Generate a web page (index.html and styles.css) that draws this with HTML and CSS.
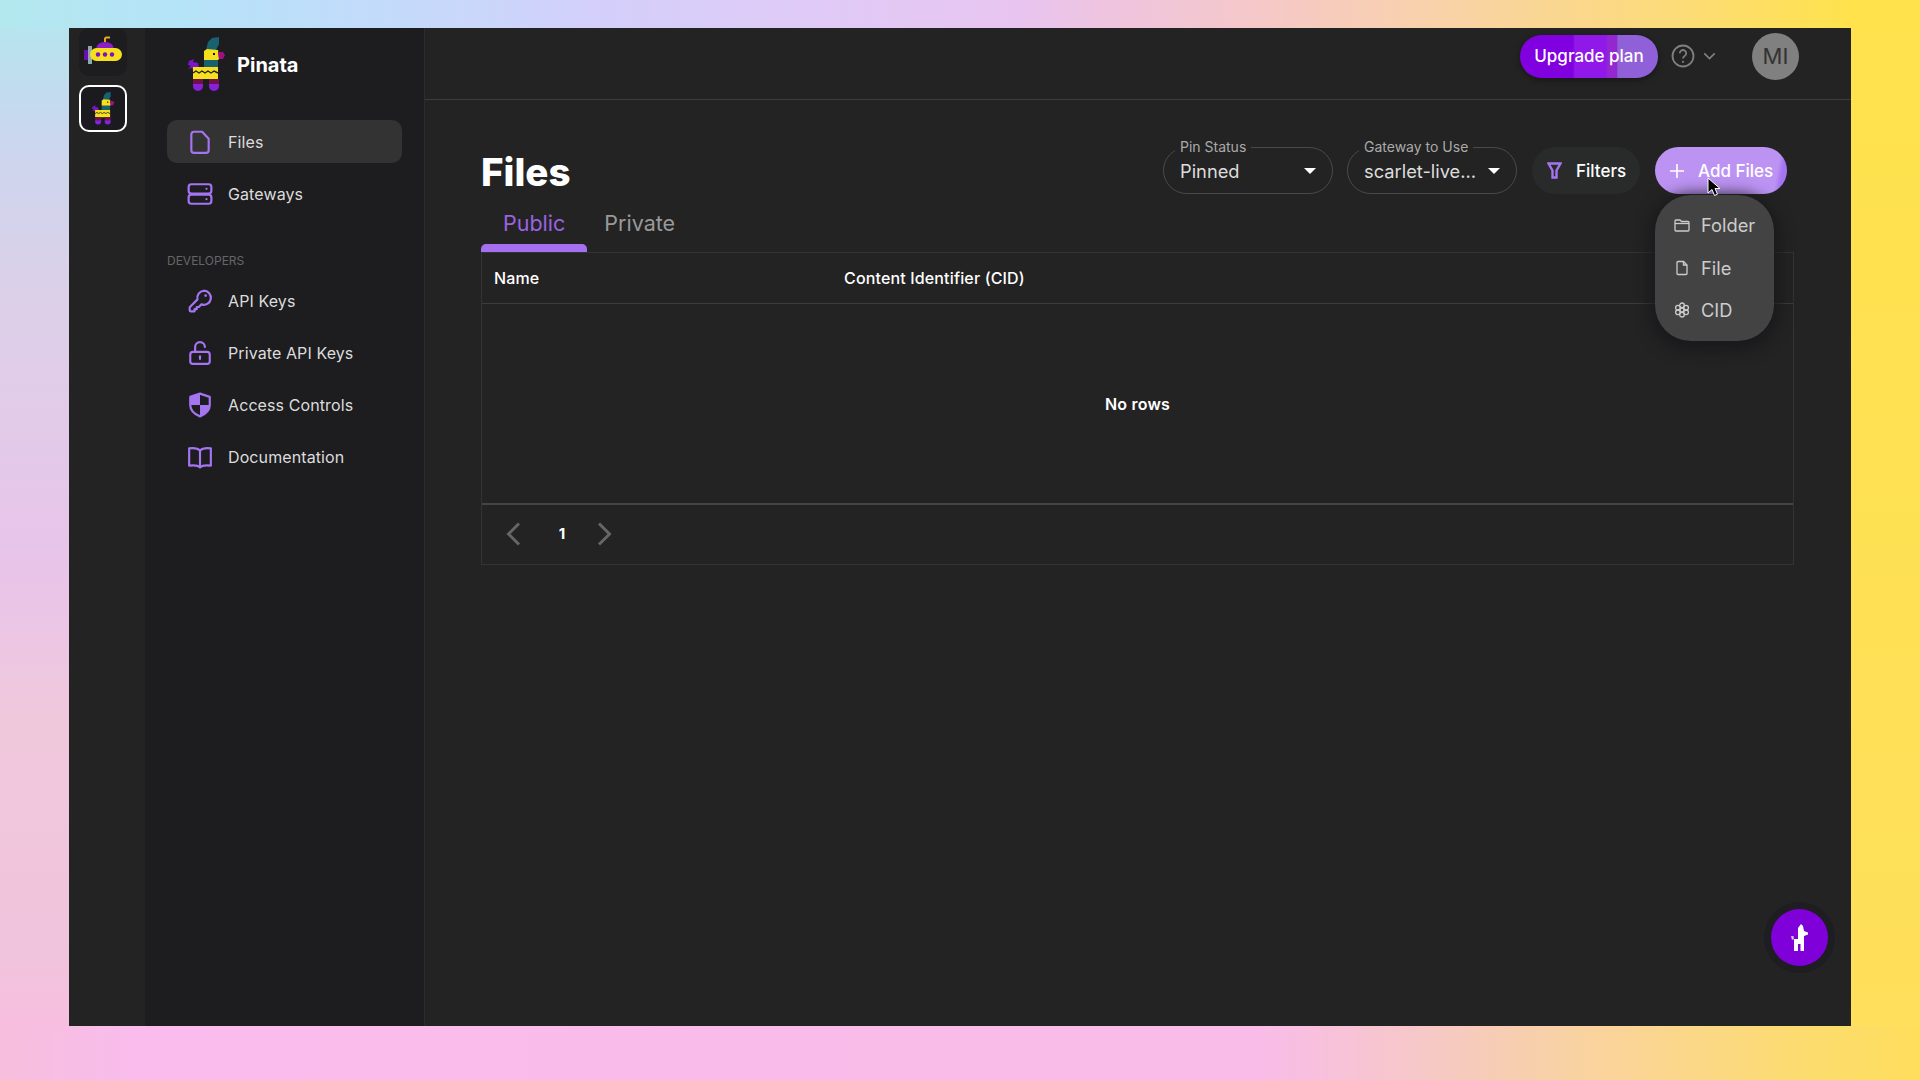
FILE: index.html
```html
<!DOCTYPE html>
<html lang="en">
<head>
    <meta charset="UTF-8">
    <title>Files | Pinata</title>
    <link rel="stylesheet" href="styles.css">
</head>
<body>
    <svg class="defs" width="0" height="0">
        <symbol id="llama" viewBox="8 7 38 55">
            <polygon points="9,31 14,29 13,32 18,33 19,38 14,42 12,38 8,39 11,36 8,35" fill="#7a18c8"/>
            <polygon points="26,20 28,12 32,8 39,7 39,14 36,20" fill="#17626e"/>
            <polygon points="24,21 27,19 38,20 39,29 38,30 24,30" fill="#f6e01e"/>
            <rect x="33" y="23" width="2" height="2" fill="#111"/>
            <polygon points="38,22 43,22 45,25 43,29 39,29" fill="#a0107e"/>
            <rect x="24" y="30" width="14" height="7" fill="#17626e"/>
            <rect x="13" y="37" width="25" height="12" fill="#f6e01e"/>
            <polyline points="13,43 16,41 19,43 22,41 25,43 28,41 31,43 34,41 38,43" fill="none" stroke="#222" stroke-width="1.4"/>
            <rect x="13" y="49" width="10" height="5" fill="#6c1050"/>
            <rect x="29" y="49" width="10" height="5" fill="#6c1050"/>
            <path d="M13 54h10v2a5 5 0 0 1-10 0z" fill="#8a20d8"/>
            <path d="M29 54h10v2a5 5 0 0 1-10 0z" fill="#8a20d8"/>
        </symbol>
    </svg>

    <div class="app">
        <aside class="rail">
            <div class="rail-tile sub">
                <svg width="38" height="29" viewBox="0 0 38 29">
                    <path d="M21 6V3q0-1.500 1.500-1.500H26" fill="none" stroke="#e8a820" stroke-width="2"/>
                    <path d="M12 13q1-7 9-7t9 7z" fill="#8a20c8"/>
                    <rect x="0" y="14" width="4" height="10" fill="#6a10b0"/>
                    <rect x="4" y="10" width="4" height="18" fill="#8fa8b0"/>
                    <rect x="6" y="12" width="32" height="13" rx="6.500" fill="#f6e01e"/>
                    <circle cx="14" cy="18.500" r="2.200" fill="#7a10c8"/>
                    <circle cx="21" cy="18.500" r="2.200" fill="#7a10c8"/>
                    <circle cx="28" cy="18.500" r="2.200" fill="#7a10c8"/>
                </svg>
            </div>
            <div class="rail-tile active">
                <svg width="23" height="33"><use href="#llama"/></svg>
            </div>
        </aside>

        <nav class="sidebar">
            <div class="brand">
                <svg width="38" height="55"><use href="#llama"/></svg>
                <span>Pinata</span>
            </div>
            <div class="nav-group">
                <a class="nav-item active">
                    <svg class="nav-icon" viewBox="0 0 24 24"><path d="M7 2.500h7l6 6.500v10.500a2.500 2.500 0 0 1-2.500 2.500h-11A2.500 2.500 0 0 1 4 19.500V5a2.500 2.500 0 0 1 2.500-2.500z"/></svg>
                    Files
                </a>
                <a class="nav-item">
                    <svg class="nav-icon" viewBox="0 0 24 24"><rect x="1.500" y="3" width="21" height="8.500" rx="2.500"/><rect x="1.500" y="12.500" width="21" height="8.500" rx="2.500"/><circle class="solid" cx="18" cy="7.200" r="1"/><circle class="solid" cx="18" cy="16.800" r="1"/></svg>
                    Gateways
                </a>
            </div>
            <div class="nav-label">DEVELOPERS</div>
            <div class="nav-group">
                <a class="nav-item">
                    <svg class="nav-icon" viewBox="0 0 24 24"><path d="M15.500 2.500a6.500 6.500 0 1 1-2.200 12.600L11 17.500H9v2H7v2H3.500a1 1 0 0 1-1-1v-2.800l7.200-7.200a6.500 6.500 0 0 1 5.800-8z"/><circle class="solid" cx="17.200" cy="7" r="1.200"/></svg>
                    API Keys
                </a>
                <a class="nav-item">
                    <svg class="nav-icon" viewBox="0 0 24 24"><rect x="3" y="11" width="18" height="11" rx="2.500"/><path d="M7.500 11V6.500a4.500 4.500 0 0 1 9 0"/><path d="M12 15v2.500"/></svg>
                    Private API Keys
                </a>
                <a class="nav-item">
                    <svg class="nav-icon" viewBox="0 0 24 24"><path d="M12 1.500l9 3V12c0 5-4 8.500-9 10.500C7 20.500 3 17 3 12V4.500z"/><path class="solid" d="M12 1.500L3 4.500V12h9z"/><path class="solid" d="M12 12h9c0 5-4 8.500-9 10.500z"/></svg>
                    Access Controls
                </a>
                <a class="nav-item">
                    <svg class="nav-icon" viewBox="0 0 24 24"><path d="M12 6C10 4 6 3.500 2 4v16c4-.5 8-.5 10 1.500 2-2 6-2 10-1.500V4c-4-.5-8 0-10 2z"/><path d="M12 6v15.500"/></svg>
                    Documentation
                </a>
            </div>
        </nav>

        <main class="main">
            <header class="topbar">
                <button class="upgrade-btn">Upgrade plan</button>
                <svg class="help-icon" viewBox="0 0 24 24"><circle cx="12" cy="12" r="10.500"/><path d="M8.800 9.200a3.200 3.200 0 1 1 4.800 2.800c-1 .6-1.600 1.200-1.600 2.400"/><circle class="solid" cx="12" cy="17.800" r="1.100"/></svg>
                <svg class="help-chevron" viewBox="0 0 10 6"><path d="M1 1l4 4 4-4"/></svg>
                <div class="avatar">MI</div>
            </header>

            <section class="content">
                <div class="title-row">
                    <h1>Files</h1>
                    <div class="controls">
                        <div class="select">
                            <span class="select-label">Pin Status</span>
                            <span class="select-value">Pinned</span>
                            <span class="caret"></span>
                        </div>
                        <div class="select">
                            <span class="select-label">Gateway to Use</span>
                            <span class="select-value">scarlet-live…</span>
                            <span class="caret"></span>
                        </div>
                        <button class="filter-btn">
                            <svg width="15" height="17" viewBox="0 0 15 17"><path d="M1.500 1.500h12L9.500 8.500v7h-4v-7z"/></svg>
                            Filters
                        </button>
                        <div class="add-wrap">
                            <button class="add-btn">
                                <svg width="14" height="14" viewBox="0 0 14 14"><path d="M7 0v14M0 7h14"/></svg>
                                Add Files
                            </button>
                            <div class="menu">
                                <div class="menu-item">
                                    <svg viewBox="0 0 16 16"><path d="M1 4a1 1 0 0 1 1-1h4l1.500 1.500H14a1 1 0 0 1 1 1V13a1 1 0 0 1-1 1H2a1 1 0 0 1-1-1z"/><path d="M1 6.500h14"/></svg>
                                    Folder
                                </div>
                                <div class="menu-item">
                                    <svg viewBox="0 0 16 16"><path d="M4 1.500h5.500L13 5v8.500a1 1 0 0 1-1 1H4a1 1 0 0 1-1-1v-11a1 1 0 0 1 1-1z"/><path d="M9.500 1.500V5H13"/></svg>
                                    File
                                </div>
                                <div class="menu-item">
                                    <svg viewBox="0 0 16 16"><circle cx="8" cy="8" r="2"/><circle cx="8" cy="3.300" r="2.300"/><circle cx="8" cy="12.700" r="2.300"/><circle cx="3.900" cy="5.700" r="2.300"/><circle cx="12.100" cy="5.700" r="2.300"/><circle cx="3.900" cy="10.300" r="2.300"/><circle cx="12.100" cy="10.300" r="2.300"/></svg>
                                    CID
                                </div>
                            </div>
                            <svg class="cursor" width="14" height="20" viewBox="0 0 14 20"><path d="M1 1v15l4-3.500 2.500 6 3-1.300-2.500-5.700h5z" fill="#000" stroke="#fff" stroke-width="1"/></svg>
                        </div>
                    </div>
                </div>

                <div class="tabs">
                    <div class="tab active">Public</div>
                    <div class="tab">Private</div>
                </div>

                <div class="table">
                    <div class="table-head">
                        <div class="col-name">Name</div>
                        <div>Content Identifier (CID)</div>
                    </div>
                    <div class="table-body">No rows</div>
                    <div class="table-foot">
                        <svg class="page-arrow" viewBox="0 0 14 24"><path d="M12.500 1.500L2 12l10.500 10.500"/></svg>
                        <span class="page-num">1</span>
                        <svg class="page-arrow" viewBox="0 0 14 24"><path d="M1.500 1.500L12 12 1.500 22.500"/></svg>
                    </div>
                </div>
            </section>
        </main>

        <button class="fab">
            <svg width="17" height="27" viewBox="0 0 17 27"><path d="M7 4l3-4 2 2 1 5 4 1.500v2L13 12v15H9.500v-7H7v7H3V15h4z" fill="#fff"/><path d="M0 12l2.500 0 .5 3-2 1z" fill="#d8b8f0"/></svg>
        </button>
    </div>
</body>
</html>
```

FILE: styles.css
```css
* {
    margin: 0;
    padding: 0;
    box-sizing: border-box;
}

body {
    width: 1920px;
    height: 1080px;
    overflow: hidden;
    padding: 28px 69px 54px;
    font-family: Inter, "Noto Sans", sans-serif;
    color: #fff;
    background-color: #f9bce8;
    background-repeat: no-repeat;
    background-position: left top, left bottom, left top, right top;
    background-size: 100% 28px, 100% 54px, 69px 100%, 69px 100%;
    background-image:
        linear-gradient(to right, #b3e8ee 0, #b5e3f8 180px, #c8d8fb 450px, #d3cffa 600px, #dfcaf7 800px, #e8c5f0 1020px, #eec4e0 1100px, #f5c8c8 1260px, #f8d0b0 1400px, #fcdc78 1680px, #ffe24c 1850px),
        linear-gradient(to right, #f7bfdc 0, #f9bcec 130px, #f9bce8 1260px, #f6c8c8 1420px, #f9d2a0 1580px, #fcdc70 1800px, #ffde5c 1920px),
        linear-gradient(to bottom, #b3e8ee 0, #bce0ee 60px, #cbd6ee 140px, #dcd0e8 300px, #e8c4ea 560px, #f0c8dc 720px, #f0c4dc 950px, #f9bde0 1040px),
        linear-gradient(to bottom, #ffe24c 0, #ffdf5c 100%);
}

.defs {
    position: absolute;
}

button {
    border: none;
    font-family: inherit;
    color: #fff;
}

.app {
    position: relative;
    display: flex;
    width: 100%;
    height: 100%;
    background: #232323;
}

/* left rail */
.rail {
    width: 76px;
    flex-shrink: 0;
    padding-right: 8px;
    display: flex;
    flex-direction: column;
    align-items: center;
    gap: 9px;
}

.rail-tile {
    width: 48px;
    height: 48px;
    border-radius: 10px;
    background: #1d1d20;
    display: flex;
    align-items: center;
    justify-content: center;
}

.rail-tile.sub {
    padding-bottom: 4px;
}

.rail-tile.active {
    border: 2px solid #fff;
    background: #1b1b1f;
    height: 47px;
}

/* sidebar */
.sidebar {
    width: 280px;
    flex-shrink: 0;
    background: #1d1d20;
    border-right: 1px solid #2c2c2e;
    padding: 9px 22px 0 22px;
}

.brand {
    display: flex;
    align-items: center;
    gap: 11px;
    padding-left: 21px;
    margin-bottom: 28px;
    font-size: 20px;
    font-weight: 700;
}

.nav-group {
    display: flex;
    flex-direction: column;
    gap: 9px;
}

.nav-item {
    height: 43px;
    display: flex;
    align-items: center;
    gap: 15px;
    padding-left: 20px;
    border-radius: 10px;
    font-size: 16px;
    letter-spacing: 0.1px;
    color: #dcdcdc;
}

.nav-item.active {
    background: #333;
}

.nav-icon {
    width: 26px;
    height: 26px;
    fill: none;
    stroke: #a574f0;
    stroke-width: 2;
    stroke-linejoin: round;
    stroke-linecap: round;
}

.nav-icon .solid {
    fill: #a574f0;
    stroke: none;
}

.nav-label {
    margin: 38px 0 10px;
    font-size: 12px;
    line-height: 16px;
    color: #666;
}

/* main area */
.main {
    flex: 1;
    min-width: 0;
}

.topbar {
    height: 72px;
    display: flex;
    align-items: center;
    justify-content: flex-end;
    padding: 0 52px 15px 0;
    border-bottom: 1px solid #3c3c3c;
}

.upgrade-btn {
    width: 138px;
    height: 43px;
    border-radius: 22px;
    font-size: 17px;
    font-weight: 500;
    background: linear-gradient(to right, #8000e0 0, #8000e0 38%, #9018e8 40%, #9018e8 62%, #9428d0 64%, #9428d0 70%, #9060d8 71%, #9060d8 100%);
    box-shadow: 0 2px 6px rgba(0, 0, 0, 0.4);
}

.help-icon {
    width: 24px;
    height: 24px;
    margin-left: 13px;
    fill: none;
    stroke: #808080;
    stroke-width: 1.8;
}

.help-icon .solid {
    fill: #808080;
    stroke: none;
}

.help-chevron {
    width: 13px;
    height: 8px;
    margin: 0 36px 0 8px;
    fill: none;
    stroke: #808080;
    stroke-width: 1.3;
}

.avatar {
    width: 47px;
    height: 47px;
    border-radius: 50%;
    background: #808080;
    color: #333;
    font-size: 22px;
    display: flex;
    align-items: center;
    justify-content: center;
}

.content {
    padding: 47px 57px 0 56px;
}

.title-row {
    display: flex;
    align-items: center;
    justify-content: space-between;
    padding-right: 7px;
    height: 47px;
}

h1 {
    font-size: 38.500px;
    font-weight: 800;
    padding-top: 2px;
}

.controls {
    display: flex;
    gap: 15px;
}

.select {
    position: relative;
    width: 170px;
    height: 47px;
    padding-left: 16px;
    padding-top: 1px;
    border: 1px solid #4a4a4a;
    border-radius: 24px;
    display: flex;
    align-items: center;
}

.select + .select {
    margin-left: -1px;
}

.select-label {
    position: absolute;
    top: -9px;
    left: 11px;
    padding: 0 5px;
    background: #232323;
    font-size: 14px;
    line-height: 16px;
    color: #aaa;
}

.select-value {
    font-size: 18.300px;
    color: #ddd;
}

.caret {
    position: absolute;
    right: 16px;
    top: 20px;
    border-left: 6px solid transparent;
    border-right: 6px solid transparent;
    border-top: 6px solid #fff;
}

.filter-btn {
    width: 108px;
    height: 47px;
    padding-left: 15px;
    border-radius: 24px;
    background: #292b2b;
    font-size: 17px;
    font-weight: 500;
    display: flex;
    align-items: center;
    gap: 14px;
}

.filter-btn svg {
    fill: none;
    stroke: #a574f0;
    stroke-width: 2.400;
}

.add-wrap {
    position: relative;
}

.add-btn {
    width: 132px;
    height: 47px;
    padding-left: 15px;
    border-radius: 24px;
    background: linear-gradient(100deg, #bc93f3 0, #bc93f3 90%, #a574f0 94%);
    font-size: 17px;
    font-weight: 500;
    display: flex;
    align-items: center;
    gap: 14px;
}

.add-btn svg {
    stroke: #fff;
    stroke-width: 1.600;
}

.menu {
    position: absolute;
    top: 48px;
    left: 0;
    width: 119px;
    height: 146px;
    padding: 9px 0;
    border-radius: 36px;
    background: #434343;
    box-shadow: 0 4px 14px 6px rgba(24, 24, 28, 0.8);
    z-index: 2;
}

.menu-item {
    height: 42.500px;
    display: flex;
    align-items: center;
    gap: 11px;
    padding-left: 19px;
    font-size: 18.300px;
    color: #ccc;
}

.menu-item svg {
    width: 16px;
    height: 16px;
    fill: none;
    stroke: #ccc;
    stroke-width: 1.300;
}

.cursor {
    position: absolute;
    top: 30px;
    left: 52px;
    z-index: 3;
}

.tabs {
    display: flex;
    height: 58px;
}

.tab {
    padding: 0 17px;
    font-size: 21.500px;
    line-height: 59px;
    color: #999;
}

.tab.active {
    position: relative;
    padding: 0 22px;
    color: #9b62e0;
}

.tab.active::after {
    content: "";
    position: absolute;
    left: 0;
    right: 0;
    bottom: 0;
    height: 8px;
    border-radius: 5px 5px 0 0;
    background: #a570f0;
}

.table {
    border: 1px solid #333;
}

.table-head {
    height: 51px;
    display: flex;
    align-items: center;
    padding-left: 12px;
    border-bottom: 1px solid #3c3c3c;
    font-size: 16px;
    font-weight: 500;
    letter-spacing: 0.15px;
}

.col-name {
    width: 350px;
}

.table-body {
    height: 201px;
    display: flex;
    align-items: center;
    justify-content: center;
    border-bottom: 2px solid #444;
    font-size: 16px;
    font-weight: 600;
    letter-spacing: 0.2px;
}

.table-foot {
    height: 59px;
    display: flex;
    align-items: center;
    padding: 0 0 2px 24px;
}

.page-arrow {
    width: 15px;
    height: 24px;
    fill: none;
    stroke: #666;
    stroke-width: 3;
}

.page-num {
    width: 70px;
    margin-left: 6px;
    text-align: center;
    font-size: 15px;
    font-weight: 700;
}

.fab {
    position: absolute;
    right: 23px;
    bottom: 60px;
    width: 57px;
    height: 57px;
    border-radius: 50%;
    background: #7f00d9;
    box-shadow: 0 0 0 7px #1d1d22;
    display: flex;
    align-items: center;
    justify-content: center;
}
```
